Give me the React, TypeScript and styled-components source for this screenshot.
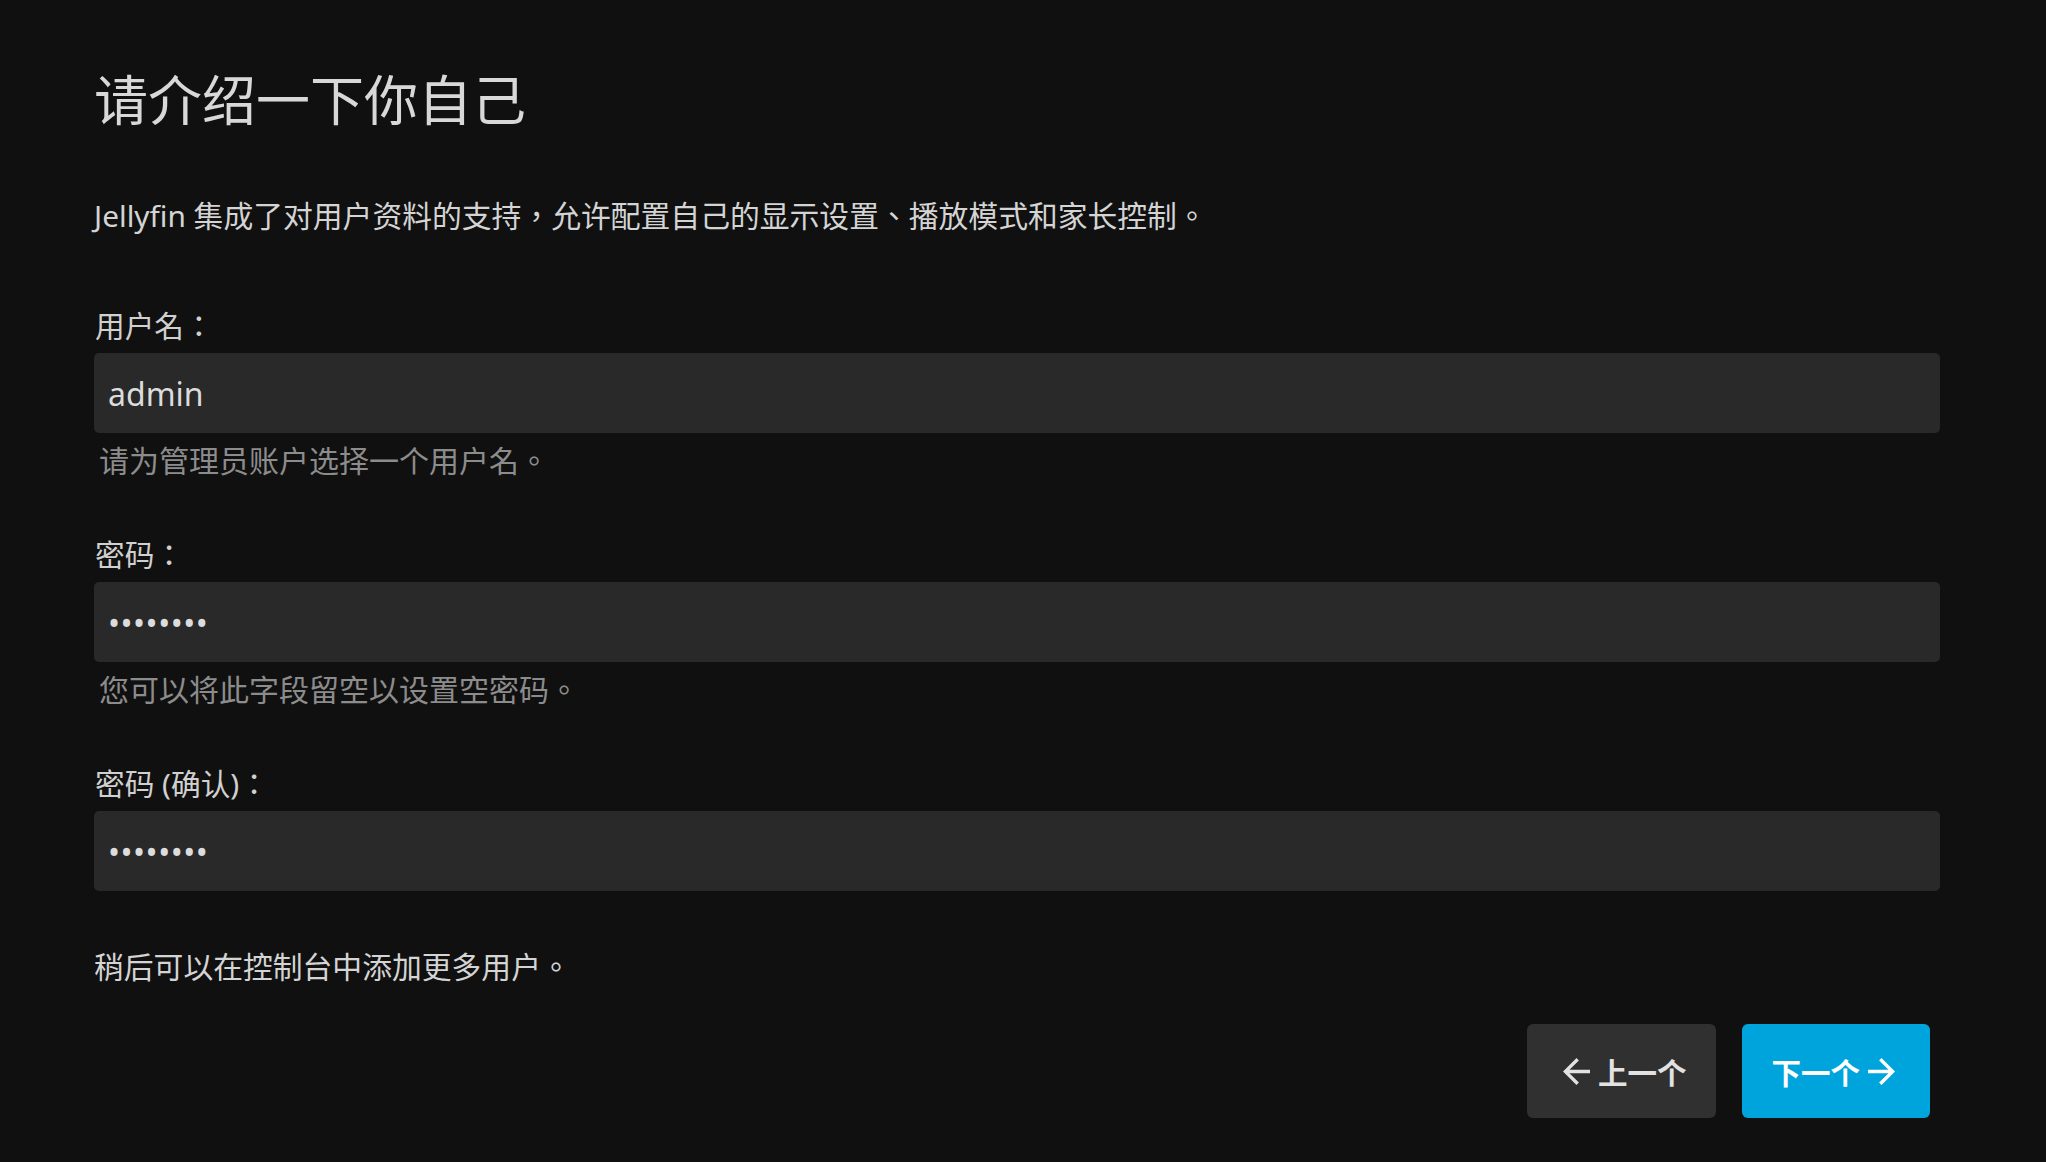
import styled, { createGlobalStyle } from "styled-components";

const fontStack = `"Noto Sans", "Noto Sans CJK TC", sans-serif`;

const GlobalStyle = createGlobalStyle`
	html, body {
		margin: 0;
		padding: 0;
		background: #101010;
	}
	body {
		font-family: ${fontStack};
		color: rgba(255, 255, 255, 0.8);
	}
`;

const Page = styled.div`
	box-sizing: border-box;
	width: 2046px;
	min-height: 1162px;
	padding: 68px 106px 0 94px;
	display: flex;
	flex-direction: column;
`;

const Title = styled.h1`
	margin: 0;
	font-size: 54px;
	line-height: 64px;
	font-weight: 400;
	color: #d8d8d8;
`;

const Text = styled.p<{ top: number }>`
	margin: ${(props) => props.top}px 0 0 0;
	font-size: 29.8px;
	line-height: 40px;
	color: #d4d4d4;
`;

const Group = styled.div<{ top: number }>`
	display: flex;
	flex-direction: column;
	margin-top: ${(props) => props.top}px;
`;

const Label = styled.label`
	font-size: 29.7px;
	line-height: 40px;
	color: #d0d0d0;
	margin-left: 1px;
`;

const Input = styled.input<{ secret?: boolean }>`
	box-sizing: border-box;
	margin-top: 7px;
	width: 100%;
	height: 80px;
	padding: 0 14px;
	border: none;
	border-radius: 5px;
	background: #292929;
	color: #dcdcdc;
	font-family: ${fontStack};
	font-size: 32px;
	letter-spacing: ${(props) => (props.secret ? "0.5px" : "0")};
	outline: none;
`;

const Hint = styled.div`
	margin-top: 8px;
	padding-left: 5px;
	font-size: 30px;
	line-height: 40px;
	color: #8c8c8c;
`;

const Buttons = styled.div`
	display: flex;
	justify-content: flex-end;
	gap: 26px;
	margin-top: 37px;
	padding-right: 10px;
`;

const Button = styled.button<{ primary?: boolean }>`
	display: flex;
	align-items: center;
	gap: 8px;
	height: 94px;
	padding: ${(props) => (props.primary ? "0 35px 0 29px" : "0 30px 0 36px")};
	border: none;
	border-radius: 6px;
	background: ${(props) => (props.primary ? "#00a4dc" : "#303030")};
	color: ${(props) => (props.primary ? "#ffffff" : "#e2e2e2")};
	font-family: ${fontStack};
	font-size: 29.5px;
	font-weight: 700;
	cursor: pointer;
	svg {
		width: 27px;
		height: 27px;
		fill: currentColor;
	}
`;

const ArrowBack = () => (
	<svg viewBox="4 4 16 16">
		<path d="M20 11H7.830l5.59-5.59L12 4l-8 8 8 8 1.41-1.41L7.83 13H20v-2z" />
	</svg>
);

const ArrowForward = () => (
	<svg viewBox="4 4 16 16">
		<path d="M12 4l-1.41 1.41L16.17 11H4v2h12.17l-5.58 5.59L12 20l8-8z" />
	</svg>
);

const App = () => {
	return (
		<Page>
			<GlobalStyle />
			<Title>请介绍一下你自己</Title>
			<Text top={64}>
				Jellyfin 集成了对用户资料的支持，允许配置自己的显示设置、播放模式和家长控制。
			</Text>

			<Group top={70}>
				<Label>用户名：</Label>
				<Input type="text" defaultValue="admin" readOnly />
				<Hint>请为管理员账户选择一个用户名。</Hint>
			</Group>

			<Group top={54}>
				<Label>密码：</Label>
				<Input type="password" secret defaultValue="password" readOnly />
				<Hint>您可以将此字段留空以设置空密码。</Hint>
			</Group>

			<Group top={54}>
				<Label>密码 (确认)：</Label>
				<Input type="password" secret defaultValue="password" readOnly />
			</Group>

			<Text top={56}>稍后可以在控制台中添加更多用户。</Text>

			<Buttons>
				<Button>
					<ArrowBack />
					上一个
				</Button>
				<Button primary>
					下一个
					<ArrowForward />
				</Button>
			</Buttons>
		</Page>
	);
};

export default App;
